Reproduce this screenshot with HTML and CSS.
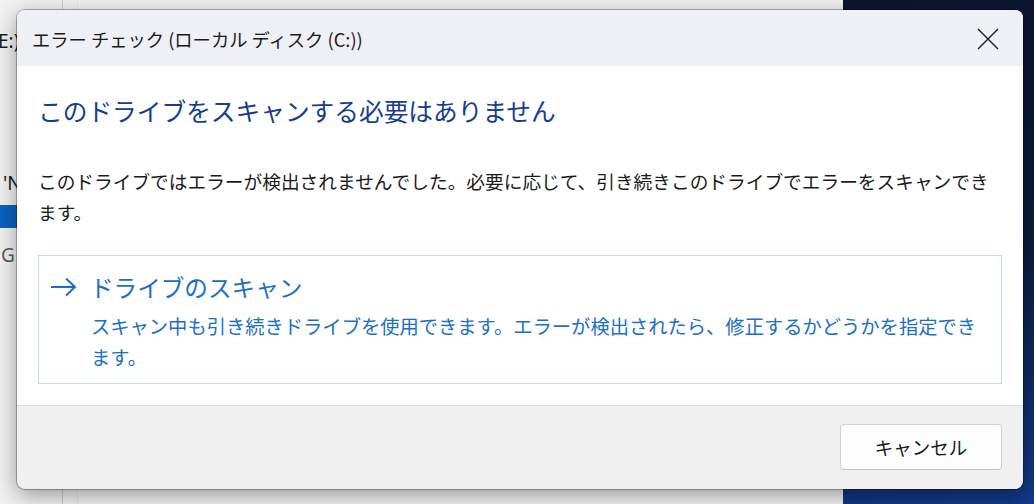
FILE: index.html
```html
<!DOCTYPE html>
<html lang="ja">
<head>
<meta charset="utf-8">
<title>エラー チェック</title>
<link rel="stylesheet" href="styles.css">
</head>
<body>
<div class="desktop">
  <div class="behind">
    <div class="behind-line l1"></div>
    <div class="behind-line l2"></div>
    <div class="behind-text t1">E:)</div>
    <div class="behind-text t2">'N</div>
    <div class="behind-sel"></div>
    <div class="behind-text t3">G</div>
  </div>
  <div class="wallpaper"></div>

  <div class="dialog">
    <div class="titlebar">
      <span class="title">エラー チェック (ローカル ディスク (C:))</span>
      <span class="close">
        <svg width="22" height="22" viewBox="0 0 22 22"><path d="M1 1 L21 21 M21 1 L1 21" stroke="#1b1b1b" stroke-width="1.4" fill="none"/></svg>
      </span>
    </div>
    <div class="content">
      <h1 class="instruction">このドライブをスキャンする必要はありません</h1>
      <p class="body-text">このドライブではエラーが検出されませんでした。必要に応じて、引き続きこのドライブでエラーをスキャンできます。</p>
      <div class="command-link">
        <span class="arrow">
          <svg width="27" height="20" viewBox="0 0 27 20"><path d="M1 10 H25 M16 1.5 L25 10 L16 18.5" stroke="#1a6fc9" stroke-width="2" fill="none"/></svg>
        </span>
        <div class="link-text">
          <div class="link-title">ドライブのスキャン</div>
          <div class="link-desc">スキャン中も引き続きドライブを使用できます。エラーが検出されたら、修正するかどうかを指定できます。</div>
        </div>
      </div>
    </div>
    <div class="footer">
      <button class="btn">キャンセル</button>
    </div>
  </div>
</div>
</body>
</html>
```
FILE: styles.css
```css
html, body {
  margin: 0;
  padding: 0;
}
body {
  width: 1034px;
  height: 504px;
  overflow: hidden;
  font-family: "Noto Sans CJK JP", "Noto Sans", sans-serif;
}
.desktop {
  position: relative;
  width: 1034px;
  height: 504px;
  background: linear-gradient(170deg, #0a1329 0%, #0b1a3a 60%, #123a8a 100%);
}
.behind {
  position: absolute;
  left: 0;
  top: 0;
  width: 843px;
  height: 504px;
  background: #f1f1f1;
}
.behind-line {
  position: absolute;
  top: 0;
  bottom: 0;
  width: 1px;
}
.l1 { left: 62px; background: #cfcfcf; }
.l2 { left: 77px; background: #e6e6e6; }
.behind-text {
  position: absolute;
  left: -2px;
  font-family: "Noto Sans", sans-serif;
  font-size: 19px;
  color: #1a1a1a;
  line-height: 24px;
}
.t1 { top: 29px; }
.t2 { top: 171px; left: 3px; }
.t3 { top: 243px; left: 1px; color: #5a5a5a; }
.behind-sel {
  position: absolute;
  left: 0;
  top: 205px;
  width: 20px;
  height: 23px;
  background: #0a62bf;
}
.dialog {
  position: absolute;
  left: 17px;
  top: 10px;
  width: 1006px;
  height: 479px;
  border-radius: 8px;
  overflow: hidden;
  display: flex;
  flex-direction: column;
  box-shadow: 0 0 0 1px rgba(0,0,0,0.28), 0 6px 22px rgba(0,0,0,0.38);
  background: #f0f0f0;
}
.titlebar {
  height: 56px;
  flex: none;
  background: #eff0f6;
  display: flex;
  align-items: center;
  justify-content: space-between;
  padding: 0 24px 0 15px;
}
.title {
  font-size: 18.3px;
  color: #1a1a1a;
  line-height: 24px;
  margin-top: 2px;
}
.close {
  display: flex;
  width: 22px;
  height: 22px;
  margin-top: 2px;
}
.content {
  height: 340px;
  flex: none;
  background: #ffffff;
  border-bottom: 1px solid #dcdcdc;
  box-sizing: border-box;
  padding: 26px 21px 0 21px;
}
.instruction {
  margin: 0;
  font-weight: normal;
  font-size: 24.7px;
  line-height: 36px;
  color: #153d93;
}
.body-text {
  margin: 37px 0 0 0;
  font-size: 18.7px;
  line-height: 31px;
  color: #1a1a1a;
}
.command-link {
  margin-top: 28px;
  border: 1px solid #c6dcf0;
  height: 129px;
  box-sizing: border-box;
  display: grid;
  grid-template-columns: 40px 1fr;
  padding: 13px 10px 0 11px;
  color: #1a6fc9;
}
.arrow {
  display: flex;
  align-items: center;
  height: 36px;
}
.link-title {
  font-size: 23.6px;
  line-height: 36px;
}
.link-desc {
  margin-top: 6px;
  margin-left: 1px;
  font-size: 19.3px;
  line-height: 31px;
}
.footer {
  flex: 1;
  display: flex;
  justify-content: flex-end;
  align-items: flex-start;
  padding: 18px 21px 0 0;
}
.btn {
  width: 162px;
  height: 46px;
  background: #fdfdfd;
  border: 1px solid #d2d2d2;
  border-bottom-color: #c4c4c4;
  border-radius: 4px;
  font-family: "Noto Sans CJK JP", "Noto Sans", sans-serif;
  font-size: 18.5px;
  color: #1a1a1a;
  padding: 0;
}
```
